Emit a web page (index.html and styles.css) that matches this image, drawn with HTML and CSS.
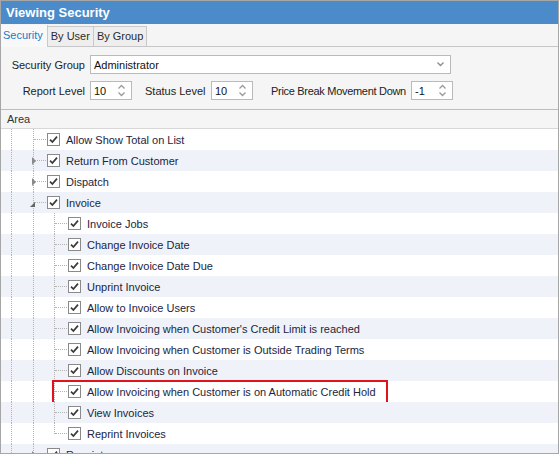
FILE: index.html
```html
<!DOCTYPE html>
<html lang="en">
  <head>
    <meta charset="UTF-8" />
    <title>Viewing Security</title>
    <link rel="stylesheet" href="styles.css">
  </head>
  <body>
    <div class="window">
      <div class="titlebar">Viewing Security</div>

      <div class="tabs">
        <div class="tab active">Security</div>
        <div class="tab">By User</div>
        <div class="tab">By Group</div>
      </div>

      <div class="filters">
        <div class="filter_row">
          <label class="label first">Security Group</label>
          <div class="combo">
            <span>Administrator</span>
            <svg width="7" height="5" viewBox="0 0 7 5"><path d="M0.5 0.5 L3.5 3.5 L6.5 0.5" fill="none" stroke="#8e8e8e" stroke-width="1.4"/></svg>
          </div>
        </div>
        <div class="filter_row">
          <label class="label first">Report Level</label>
          <div class="spin">
            <span>10</span>
            <svg width="7" height="13" viewBox="0 0 7 13"><path d="M0.5 4.5 L3.5 1.5 L6.5 4.5 M0.5 8.5 L3.5 11.5 L6.5 8.5" fill="none" stroke="#9a9a9a" stroke-width="1.3"/></svg>
          </div>
          <label class="label status">Status Level</label>
          <div class="spin">
            <span>10</span>
            <svg width="7" height="13" viewBox="0 0 7 13"><path d="M0.5 4.5 L3.5 1.5 L6.5 4.5 M0.5 8.5 L3.5 11.5 L6.5 8.5" fill="none" stroke="#9a9a9a" stroke-width="1.3"/></svg>
          </div>
          <label class="label price">Price Break Movement Down</label>
          <div class="spin">
            <span>-1</span>
            <svg width="7" height="13" viewBox="0 0 7 13"><path d="M0.5 4.5 L3.5 1.5 L6.5 4.5 M0.5 8.5 L3.5 11.5 L6.5 8.5" fill="none" stroke="#9a9a9a" stroke-width="1.3"/></svg>
          </div>
        </div>
      </div>

      <div class="grid_header">Area</div>

      <div class="rows" id="rows"></div>
    </div>

    <script type="text/javascript">
      // level 1 = section, level 2 = permission inside an open section
      const items = [
        { text: "Allow Show Total on List", level: 1 },
        { text: "Return From Customer", level: 1, node: "closed" },
        { text: "Dispatch", level: 1, node: "closed" },
        { text: "Invoice", level: 1, node: "open" },
        { text: "Invoice Jobs", level: 2 },
        { text: "Change Invoice Date", level: 2 },
        { text: "Change Invoice Date Due", level: 2 },
        { text: "Unprint Invoice", level: 2 },
        { text: "Allow to Invoice Users", level: 2 },
        { text: "Allow Invoicing when Customer's Credit Limit is reached", level: 2 },
        { text: "Allow Invoicing when Customer is Outside Trading Terms", level: 2 },
        { text: "Allow Discounts on Invoice", level: 2 },
        { text: "Allow Invoicing when Customer is on Automatic Credit Hold", level: 2, marked: true },
        { text: "View Invoices", level: 2 },
        { text: "Reprint Invoices", level: 2, last: true },
        { text: "Receipt", level: 1, node: "closed" },
      ];

      const checkbox =
        '<svg class="check" width="13" height="13" viewBox="0 0 13 13">' +
        '<rect x="0.5" y="0.5" width="12" height="12" fill="#fff" stroke="#8a8a8a"/>' +
        '<path d="M3 6.6 L5.4 9 L10 3.6" fill="none" stroke="#3a3a3a" stroke-width="1.7"/></svg>';

      const $rows = document.querySelector("#rows");

      items.forEach((item) => {
        const $row = document.createElement("div");
        $row.className = "row" + (item.marked ? " marked" : "");

        let html = "";
        for (let i = 0; i < item.level; i++) {
          html += '<span class="guide"></span>';
        }
        html += '<span class="elbow' + (item.last ? " last" : "") + '">';
        if (item.node) {
          html += '<i class="node ' + item.node + '"></i>';
        }
        html += "</span>";
        html += checkbox;
        html += '<span class="text">' + item.text + "</span>";

        $row.innerHTML = html;
        $rows.appendChild($row);
      });
    </script>
  </body>
</html>
```

FILE: styles.css
```css
body {
  margin: 0;
}
.window {
  width: 559px;
  height: 454px;
  box-sizing: border-box;
  border: 1px solid #a6a6a6;
  background-color: #f5f5f5;
  font-family: "Liberation Sans", Arial, sans-serif;
  font-size: 11px;
  color: #1e1e1e;
  display: flex;
  flex-direction: column;
  overflow: hidden;
}
.titlebar {
  height: 23px;
  line-height: 23px;
  padding-left: 5px;
  background-color: #4b8bca;
  color: #fff;
  font-size: 13px;
  font-weight: bold;
  flex-shrink: 0;
}

/* tabs */
.tabs {
  height: 22px;
  display: flex;
  align-items: flex-end;
  border-bottom: 1px solid #c6c6c6;
  flex-shrink: 0;
}
.tab {
  height: 19px;
  line-height: 19px;
  padding: 0 3px 0 3px;
  background-color: #eeeeee;
  border-top: 1px solid #c9c9c9;
  border-right: 1px solid #c9c9c9;
  color: #2b2b2b;
  font-size: 11px;
}
.tab.active {
  height: 22px;
  line-height: 21px;
  padding: 0 4px 0 2px;
  margin-bottom: -1px;
  border-top: none;
  background-color: #f8f8f8;
  color: #1a78c9;
}

/* filters */
.filters {
  height: 63px;
  box-sizing: border-box;
  padding-top: 8px;
  border-bottom: 1px solid #bdbdbd;
  flex-shrink: 0;
}
.filter_row {
  display: flex;
  align-items: center;
  height: 19px;
  margin-bottom: 7px;
}
.label {
  color: #222;
  white-space: nowrap;
}
.label.first {
  width: 84px;
  text-align: right;
  margin-right: 5px;
}
.label.status {
  width: 61px;
  margin-left: 13px;
  margin-right: 5px;
}
.label.price {
  width: 135px;
  margin-left: 18px;
  margin-right: 5px;
  letter-spacing: -0.3px;
}
.combo,
.spin {
  height: 19px;
  box-sizing: border-box;
  border: 1px solid #bababa;
  background-color: #fff;
  display: flex;
  align-items: center;
  justify-content: space-between;
  padding-left: 3px;
  color: #111;
}
.combo {
  width: 361px;
  padding-right: 6px;
}
.spin {
  width: 42px;
  padding-right: 6px;
}

/* tree grid */
.grid_header {
  height: 18px;
  line-height: 18px;
  padding-left: 6px;
  border-bottom: 1px solid #d8d8d8;
  color: #333;
  flex-shrink: 0;
}
.rows {
  flex: 1;
  background-color: #fff;
}
.row {
  position: relative;
  height: 21px;
  display: flex;
  align-items: center;
  color: #1c2540;
}
.row:nth-child(even) {
  background-color: #eff3f9;
}
.guide,
.elbow {
  position: relative;
  width: 21px;
  height: 21px;
  flex-shrink: 0;
}
.guide::before,
.elbow::before {
  content: "";
  position: absolute;
  left: 10px;
  top: 0;
  bottom: 0;
  border-left: 1px dotted #b3b3b3;
}
.guide + .guide::before,
.guide + .elbow::before {
  left: 11px;
}
.elbow.last::before {
  bottom: 10px;
}
.elbow::after {
  content: "";
  position: absolute;
  left: 12px;
  width: 12px;
  top: 10px;
  border-top: 1px dotted #b3b3b3;
}
.check {
  margin-left: 4px;
  flex-shrink: 0;
}
.text {
  margin-left: 6px;
  white-space: nowrap;
}

/* expand / collapse arrows sit on the tree line */
.node {
  position: absolute;
  z-index: 1;
  width: 0;
  height: 0;
}
.node.closed {
  left: 10px;
  top: 7px;
  border-left: 4px solid #8a8a8a;
  border-top: 4px solid transparent;
  border-bottom: 4px solid transparent;
}
.node.open {
  left: 8px;
  top: 10px;
  border-right: 5px solid #666;
  border-top: 5px solid transparent;
}

/* highlighted permission */
.row.marked::after {
  content: "";
  position: absolute;
  left: 51px;
  top: -1px;
  width: 336px;
  height: 24px;
  box-sizing: border-box;
  border: 2px solid #e0131c;
}
```
